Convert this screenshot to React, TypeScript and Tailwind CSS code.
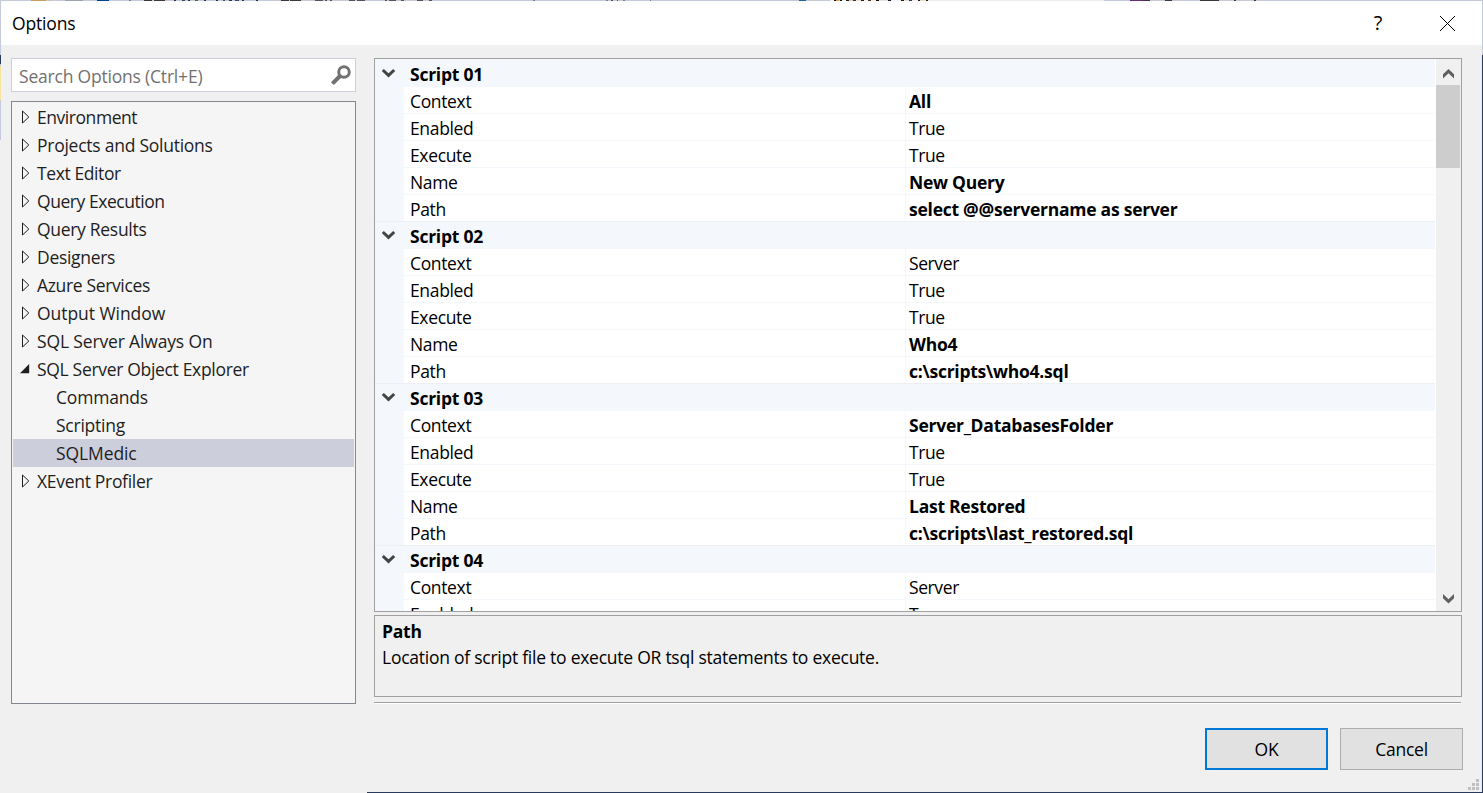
import React from "react";

type Node = { label: string; kind: "closed" | "open" | "leaf"; selected?: boolean; track?: string };

const tree: Node[] = [
  { label: "Environment", kind: "closed", track: "tracking-[-0.45px]" },
  { label: "Projects and Solutions", kind: "closed" },
  { label: "Text Editor", kind: "closed", track: "tracking-[-0.4px]" },
  { label: "Query Execution", kind: "closed", track: "tracking-[-0.45px]" },
  { label: "Query Results", kind: "closed", track: "tracking-[-0.3px]" },
  { label: "Designers", kind: "closed", track: "tracking-[-0.3px]" },
  { label: "Azure Services", kind: "closed", track: "tracking-[-0.35px]" },
  { label: "Output Window", kind: "closed", track: "tracking-[-0.05px]" },
  { label: "SQL Server Always On", kind: "closed", track: "tracking-[-0.15px]" },
  { label: "SQL Server Object Explorer", kind: "open", track: "tracking-[-0.32px]" },
  { label: "Commands", kind: "leaf", track: "tracking-[-0.2px]" },
  { label: "Scripting", kind: "leaf" },
  { label: "SQLMedic", kind: "leaf", track: "tracking-[-0.1px]", selected: true },
  { label: "XEvent Profiler", kind: "closed", track: "tracking-[-0.3px]" },
];

type Row = { name: string; value: string; bold?: boolean };
type Group = { title: string; rows: Row[] };

const groups: Group[] = [
  {
    title: "Script 01",
    rows: [
      { name: "Context", value: "All", bold: true },
      { name: "Enabled", value: "True" },
      { name: "Execute", value: "True" },
      { name: "Name", value: "New Query", bold: true },
      { name: "Path", value: "select @@servername as server", bold: true },
    ],
  },
  {
    title: "Script 02",
    rows: [
      { name: "Context", value: "Server" },
      { name: "Enabled", value: "True" },
      { name: "Execute", value: "True" },
      { name: "Name", value: "Who4", bold: true },
      { name: "Path", value: "c:\\scripts\\who4.sql", bold: true },
    ],
  },
  {
    title: "Script 03",
    rows: [
      { name: "Context", value: "Server_DatabasesFolder", bold: true },
      { name: "Enabled", value: "True" },
      { name: "Execute", value: "True" },
      { name: "Name", value: "Last Restored", bold: true },
      { name: "Path", value: "c:\\scripts\\last_restored.sql", bold: true },
    ],
  },
  {
    title: "Script 04",
    rows: [
      { name: "Context", value: "Server" },
      { name: "Enabled", value: "True" },
    ],
  },
];

function Expander({ kind }: { kind: Node["kind"] }) {
  if (kind === "open")
    return (
      <svg width="10" height="10" viewBox="0 0 10 10" className="mr-[7px] ml-[7px] shrink-0" fill="#1e1e1e">
        <path d="M9.2 0V9.2H0Z" />
      </svg>
    );
  return (
    <svg width="8" height="14" viewBox="0 0 8 14" className="mr-[7px] ml-[9px] shrink-0" fill="none" stroke="#1e1e1e">
      <path d="M0.5 1V13L6.8 7Z" strokeWidth="1" />
    </svg>
  );
}

function TreePane() {
  return (
    <div className="mt-[9px] h-[603px] border border-[#828790] bg-[#f5f5f5] p-px text-[#1e1e1e]">
      {tree.map((n) => (
        <div
          key={n.label}
          className={`flex h-7 items-center whitespace-nowrap ${n.selected ? "bg-[#cccedb]" : ""} ${n.kind === "leaf" ? "pl-[43px]" : ""}`}
        >
          {n.kind !== "leaf" && <Expander kind={n.kind} />}
          <span className={n.track ?? ""}>{n.label}</span>
        </div>
      ))}
    </div>
  );
}

function GroupBlock({ group, first }: { group: Group; first: boolean }) {
  return (
    <section>
      <div className={`flex items-center bg-[#f4f7fc] font-bold ${first ? "h-7 pt-px" : "h-[27px]"}`}>
        <svg width="16" height="12" viewBox="0 0 16 12" className="mr-[14px] mb-px ml-[5px] shrink-0" fill="none" stroke="#444" strokeWidth="3">
          <path d="M2.8 3L8.5 8.4L14.2 3" />
        </svg>
        <span>{group.title}</span>
      </div>
      {group.rows.map((r, i) => {
        const last = i === 4;
        return (
          <div key={r.name} className={`flex h-[27px] ${last ? "border-b border-[#eeeff2]" : ""}`}>
            <div className="w-[29px] bg-[#f4f7fc]" />
            <div className={`flex w-[502px] items-center border-r border-[#f4f7fc] pt-[2px] pl-[6px] tracking-[-0.35px] ${last ? "" : "border-b"}`}>
              {r.name}
            </div>
            <div
              className={`flex flex-1 items-center pt-[2px] pl-[3px] whitespace-nowrap ${last ? "" : "border-b border-[#f4f7fc]"} ${r.bold ? "font-bold" : "tracking-[-0.4px]"}`}
            >
              {r.value}
            </div>
          </div>
        );
      })}
    </section>
  );
}

function PropertyGrid() {
  return (
    <div className="flex h-[554px] overflow-hidden border border-[#a0a0a0] bg-white text-black">
      <div className="h-full w-[1060px] overflow-hidden">
        {groups.map((g, i) => (
          <GroupBlock key={g.title} group={g} first={i === 0} />
        ))}
      </div>
      <div className="ml-px flex flex-1 flex-col bg-[#f0f0f0]">
        <div className="flex h-[26px] pt-[10px] pl-[7px]">
          <svg width="11" height="10" viewBox="0 0 11 10" fill="#606060">
            <path d="M5.5 0L11 5.2V9.4L5.5 4.2L0 9.4V5.2Z" />
          </svg>
        </div>
        <div className="h-[83px] w-6 bg-[#cdcdcd]" />
        <div className="mt-auto flex h-[18px] pt-px pl-[7px]">
          <svg width="11" height="10" viewBox="0 0 11 10" fill="#606060">
            <path d="M5.5 9.4L11 4.2V0L5.5 5.2L0 0V4.2Z" />
          </svg>
        </div>
      </div>
    </div>
  );
}

const strip: [number, number, string][] = [
  [31, 15, "#c99d55"], [49, 2, "#d9b98c"], [65, 18, "#9da2b1"], [97, 12, "#00438a"], [129, 2, "#7a7f90"],
  [144, 8, "#3b3637"], [154, 11, "#3b3637"], [174, 2, "#23345c"], [182, 3, "#3c4a60"], [188, 2, "#23345c"],
  [195, 3, "#6a6048"], [204, 2, "#23345c"], [216, 2, "#23345c"], [223, 2, "#5a5048"], [229, 3, "#23345c"],
  [235, 4, "#3f4a68"], [242, 2, "#23345c"], [256, 2, "#23345c"], [281, 8, "#3b3637"], [290, 11, "#3b3637"],
  [315, 8, "#55525a"], [325, 2, "#55525a"], [330, 2, "#55525a"], [349, 6, "#55525a"], [357, 8, "#55525a"],
  [385, 2, "#55525a"], [389, 7, "#55525a"], [401, 3, "#55525a"], [417, 6, "#55525a"], [429, 3, "#55525a"],
  [533, 2, "#7a7f90"], [606, 2, "#7a7f90"], [611, 2, "#55525a"], [617, 1, "#55525a"], [623, 2, "#7a7f90"],
  [650, 1, "#7a7f90"], [659, 4, "#245f9e"], [676, 154, "#ececec"], [678, 2, "#111"], [682, 2, "#e0a050"],
];

const toolbar: [number, number, string][] = [
  ...strip.filter(([x]) => x < 655),
  [799, 7, "#245f9e"], [830, 4, "#f0f0f0"], [834, 2, "#111"], [836, 3, "#e0a050"],
  [840, 2, "#111"], [842, 4, "#f0f0f0"], [846, 3, "#222"], [849, 4, "#d9c8a8"], [853, 3, "#223a70"],
  [856, 5, "#f0e0c8"], [861, 3, "#222"], [864, 4, "#f0f0f0"], [868, 3, "#553311"], [871, 5, "#f0f0f0"],
  [876, 3, "#111"], [879, 9, "#dde4f0"], [888, 3, "#222"], [891, 10, "#f0f0f0"], [901, 3, "#222"],
  [904, 5, "#f0e0c8"], [909, 3, "#223a70"], [912, 6, "#f0f0f0"], [918, 2, "#222"], [920, 6, "#f0e0c8"],
  [926, 2, "#222"], [928, 176, "#ececec"], [1130, 13, "#6b2c7c"], [1143, 7, "#3b3637"], [1165, 7, "#3b3637"],
  [1200, 19, "#3b3637"], [1234, 2, "#3b3637"], [1254, 2, "#3b3637"],
];

export default function App() {
  return (
    <div className="relative flex h-[793px] w-[1483px] flex-col overflow-hidden bg-[#f0f0f0] font-['Open_Sans','Noto_Sans',sans-serif] text-[17.5px] leading-6 tracking-[-0.25px] text-black">
      <svg width="1483" height="1" className="block shrink-0 bg-[#c5cada]" shapeRendering="crispEdges">
        {toolbar.map(([x, w, c]) => (
          <rect key={x} x={x} width={w} height="1" fill={c} />
        ))}
      </svg>
      <div className="flex min-h-0 flex-1">
        <div className="flex w-px flex-col">
          <div className="h-[54px] bg-[#c5cada]" />
          <div className="h-[9px] bg-[#29395b]" />
          <div className="h-[2px] bg-[#c5cada]" />
          <div className="h-[34px] bg-[#f5e59c]" />
          <div className="h-[40px] bg-[#c5cada]" />
        </div>
        <div className="flex min-w-0 flex-1 flex-col">
          <header className="flex h-11 items-center bg-white pl-[11px]">
            <h1 className="tracking-[-0.15px]">Options</h1>
            <span className="ml-auto w-[10px] pb-px text-center text-[20px]">?</span>
            <svg width="17" height="17" viewBox="0 0 17 17" className="mr-[26px] ml-[56px]" stroke="#000" strokeWidth="1">
              <path d="M1 1L16 16M16 1L1 16" />
            </svg>
          </header>
          <main className="flex pt-[13px] pl-[10px]">
            <aside className="w-[345px]">
              <div className="flex h-[34px] items-center justify-between border border-[#cccedb] bg-white pr-[4px] pl-[7px] text-[#717171]">
                <span className="pt-px tracking-[-0.2px]">Search Options (Ctrl+E)</span>
                <svg width="20" height="20" viewBox="0 0 20 20" fill="none" stroke="#717171">
                  <circle cx="13" cy="7" r="5.3" strokeWidth="3" />
                  <path d="M9 11L1.4 18.6" strokeWidth="4" />
                </svg>
              </div>
              <TreePane />
            </aside>
            <div className="ml-[18px] w-[1088px]">
              <PropertyGrid />
              <div className="mt-[3px] h-[82px] border border-[#a0a0a0] pt-[3px] pl-[7px]">
                <h2 className="font-bold">Path</h2>
                <p className="mt-[2px] whitespace-nowrap">Location of script file to execute OR tsql statements to execute.</p>
              </div>
              <div className="mt-[5px] mr-px h-[2px] border-t border-[#a0a0a0] bg-white" />
            </div>
          </main>
          <footer className="mt-6 mr-[19px] flex justify-end gap-3">
            <button className="h-[42px] w-[123px] border-2 border-[#0078d7] bg-[#e1e1e1] pb-px">OK</button>
            <button className="h-[42px] w-[123px] border border-[#adadad] bg-[#e1e1e1] pb-px">Cancel</button>
          </footer>
          <svg width="11" height="11" viewBox="0 0 11 11" className="mt-[9px] mr-[3px] ml-auto" fill="#bfbfbf" shapeRendering="crispEdges">
            <path d="M8 0h3v3h-3zM4 4h3v3h-3zM8 4h3v3h-3zM0 8h3v3h-3zM4 8h3v3h-3zM8 8h3v3h-3z" />
          </svg>
          <div className="mt-auto ml-[366px] h-px bg-[#29395b]" />
        </div>
        <div className="flex w-px flex-col">
          <div className="h-[54px] bg-[#c5cada]" />
          <div className="flex-1 bg-[#29395b]" />
        </div>
      </div>
    </div>
  );
}
